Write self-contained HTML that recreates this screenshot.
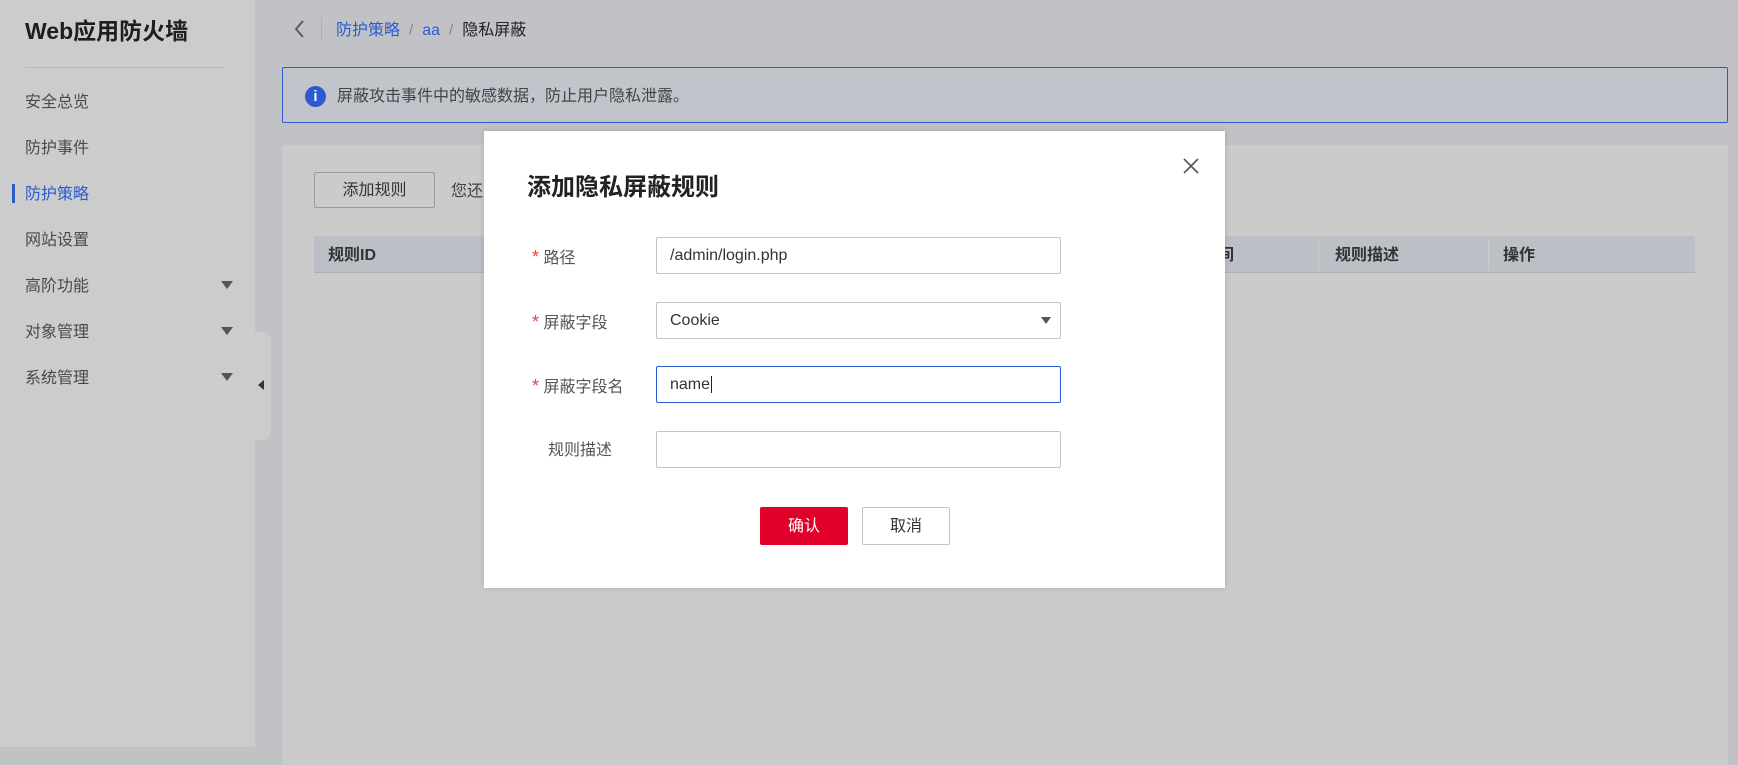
<!DOCTYPE html>
<html><head><meta charset="utf-8"><style>
*{margin:0;padding:0;box-sizing:border-box}
body{width:1738px;height:747px;overflow:hidden;background:#c1c2c5;font-family:"Liberation Sans","Noto Sans CJK SC",sans-serif;position:relative;color:#333;line-height:1.45}
.a{position:absolute}
.side{left:0;top:0;width:255px;height:747px;background:#cccccc}
.title{left:25px;top:15px;font-size:23px;font-weight:bold;color:#1e1e1e}
.menu{left:25px;font-size:16px;color:#4a4a4a}
.tri{left:221px;width:0;height:0;border-left:6px solid transparent;border-right:6px solid transparent;border-top:8px solid #555}
.card{left:282px;top:145px;width:1446px;height:620px;background:#cbcbcb}
.modal{left:484px;top:131px;width:741px;height:457px;background:#fff;box-shadow:0 0 6px rgba(0,0,0,.15)}
.lab{font-size:16px;color:#555}
.star{color:#e8433f;font-size:18px}
.inp{left:172px;width:405px;height:37px;border:1px solid #c4c4c4;border-radius:2px;font-size:16px;color:#333;padding:6px 13px}
</style></head><body>
<div class="a side"></div>
<div class="a title">Web应用防火墙</div>
<div class="a" style="left:25px;top:67px;width:200px;height:1px;background:#b8b8b8"></div>
<div class="a menu" style="top:91px">安全总览</div>
<div class="a menu" style="top:137px">防护事件</div>
<div class="a" style="left:12px;top:184px;width:3px;height:19px;background:#2c5bd1"></div>
<div class="a menu" style="top:183px;color:#2c5bd1">防护策略</div>
<div class="a menu" style="top:229px">网站设置</div>
<div class="a menu" style="top:275px">高阶功能</div><div class="a tri" style="top:281px"></div>
<div class="a menu" style="top:321px">对象管理</div><div class="a tri" style="top:327px"></div>
<div class="a menu" style="top:367px">系统管理</div><div class="a tri" style="top:373px"></div>
<div class="a" style="left:255px;top:332px;width:16px;height:108px;background:#cccccc;border-radius:0 8px 8px 0"></div>
<div class="a" style="left:258px;top:380px;width:0;height:0;border-top:5px solid transparent;border-bottom:5px solid transparent;border-right:6px solid #333"></div>

<svg class="a" style="left:293px;top:19px" width="14" height="20"><path d="M10 2 L3 10 L10 18" stroke="#555" stroke-width="1.8" fill="none"/></svg>
<div class="a" style="left:321px;top:17px;width:1px;height:24px;background:#b0b0b0"></div>
<div class="a" style="left:336px;top:19px;font-size:16px;color:#2c5bd1">防护策略 <span style="color:#888">&nbsp;/&nbsp;</span> aa <span style="color:#888">&nbsp;/&nbsp;</span> <span style="color:#222">隐私屏蔽</span></div>

<div class="a" style="left:282px;top:67px;width:1446px;height:56px;border:1px solid #2c5bd1;border-radius:2px;background:#c1c4ca"></div>
<div class="a" style="left:305px;top:86px;width:21px;height:21px;border-radius:50%;background:#2c5bd1;color:#fff;font-size:15px;font-weight:bold;text-align:center;line-height:21px">i</div>
<div class="a" style="left:337px;top:85px;font-size:16px;color:#444">屏蔽攻击事件中的敏感数据，防止用户隐私泄露。</div>

<div class="a card"></div>
<div class="a" style="left:314px;top:172px;width:121px;height:36px;border:1px solid #999;border-radius:2px;font-size:16px;text-align:center;line-height:36px;color:#333">添加规则</div>
<div class="a" style="left:451px;top:180px;font-size:16px;color:#444">您还</div>
<div class="a" style="left:314px;top:236px;width:1381px;height:37px;background:#bcbfc6;border-bottom:1px solid #b0b0b0"></div>
<div class="a" style="left:328px;top:244px;font-size:16px;font-weight:bold;color:#333">规则ID</div>
<div class="a" style="left:1218px;top:244px;font-size:16px;font-weight:bold;color:#333">间</div>
<div class="a" style="left:1318px;top:238px;width:1px;height:33px;background:#ccc"></div>
<div class="a" style="left:1335px;top:244px;font-size:16px;font-weight:bold;color:#333">规则描述</div>
<div class="a" style="left:1488px;top:238px;width:1px;height:33px;background:#ccc"></div>
<div class="a" style="left:1503px;top:244px;font-size:16px;font-weight:bold;color:#333">操作</div>

<div class="a modal">
 <div class="a" style="left:43px;top:40px;font-size:24px;font-weight:bold;color:#222">添加隐私屏蔽规则</div>
 <svg class="a" style="left:699px;top:27px" width="16" height="16"><path d="M1 1L15 15M15 1L1 15" stroke="#555" stroke-width="1.6"/></svg>
 <div class="a lab" style="left:48px;top:113px"><span class="star">*</span> 路径</div>
 <div class="a inp" style="top:106px">/admin/login.php</div>
 <div class="a lab" style="left:48px;top:178px"><span class="star">*</span> 屏蔽字段</div>
 <div class="a inp" style="top:171px">Cookie</div>
 <div class="a" style="left:557px;top:186px;width:0;height:0;border-left:5px solid transparent;border-right:5px solid transparent;border-top:7px solid #555"></div>
 <div class="a lab" style="left:48px;top:242px"><span class="star">*</span> 屏蔽字段名</div>
 <div class="a inp" style="top:235px;border-color:#2c5bd1">name<span style="border-left:1px solid #222;margin-left:1px"></span></div>
 <div class="a lab" style="left:64px;top:308px">规则描述</div>
 <div class="a inp" style="top:300px"></div>
 <div class="a" style="left:276px;top:376px;width:88px;height:38px;background:#e0002a;border-radius:2px;color:#fff;font-size:16px;text-align:center;line-height:39px">确认</div>
 <div class="a" style="left:378px;top:376px;width:88px;height:38px;border:1px solid #c4c4c4;border-radius:2px;color:#333;font-size:16px;text-align:center;line-height:37px">取消</div>
</div>
</body></html>
